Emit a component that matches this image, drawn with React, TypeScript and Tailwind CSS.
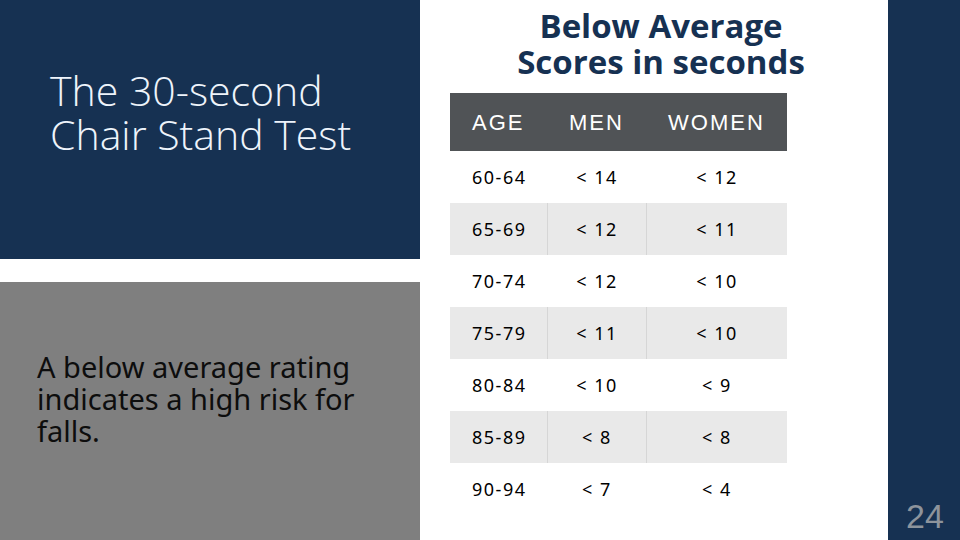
const rows = [
  { age: "60-64", men: "< 14", women: "< 12" },
  { age: "65-69", men: "< 12", women: "< 11" },
  { age: "70-74", men: "< 12", women: "< 10" },
  { age: "75-79", men: "< 11", women: "< 10" },
  { age: "80-84", men: "< 10", women: "< 9" },
  { age: "85-89", men: "< 8", women: "< 8" },
  { age: "90-94", men: "< 7", women: "< 4" },
];

function ScoreTable() {
  return (
    <div className="ml-[30px] w-[337px] font-['Noto_Sans',sans-serif]">
      {/* Header */}
      <div className="flex h-[58px] items-center bg-[#505356] font-['Liberation_Sans',sans-serif] text-[22px] tracking-[2px] text-white">
        <div className="w-[97px] pl-[22px]">AGE</div>
        <div className="w-[99px] text-center">MEN</div>
        <div className="flex-1 text-center">WOMEN</div>
      </div>

      {rows.map((row, i) => {
        const shaded = i % 2 === 1;
        return (
          <div
            key={row.age}
            className={`flex h-[52px] items-center text-[18px] tracking-[1.5px] text-black ${
              shaded ? "bg-[#e9e9e9]" : "bg-white"
            }`}
          >
            <div className="w-[97px] pl-[22px]">{row.age}</div>
            <div
              className={`flex h-full w-[99px] items-center justify-center border-l ${
                shaded ? "border-[#d6d6d6]" : "border-transparent"
              }`}
            >
              {row.men}
            </div>
            <div
              className={`flex h-full flex-1 items-center justify-center border-l ${
                shaded ? "border-[#d6d6d6]" : "border-transparent"
              }`}
            >
              {row.women}
            </div>
          </div>
        );
      })}
    </div>
  );
}

export default function App() {
  return (
    <div className="flex h-[540px] w-[960px] overflow-hidden bg-white">
      {/* Left column */}
      <div className="flex w-[420px] flex-col gap-[23px]">
        <div className="h-[259px] bg-[#163152] pl-[50px] pt-[68px]">
          <h1 className="font-['Open_Sans',sans-serif] text-[41px] font-light leading-[44px] text-[#eef4fb]">
            The 30-second
            <br />
            Chair Stand Test
          </h1>
        </div>
        <div className="flex flex-1 items-start bg-[#7f7f7f] pl-[37px] pt-[69px]">
          <p className="font-['Noto_Sans',sans-serif] text-[29px] leading-[32px] text-[#0d0d0d]">
            A below average rating
            <br />
            indicates a high risk for
            <br />
            falls.
          </p>
        </div>
      </div>

      {/* Middle: heading + table */}
      <div className="flex flex-1 flex-col">
        <h2 className="pl-[14px] pt-[8px] text-center font-['Open_Sans',sans-serif] text-[33px] font-bold leading-[36px] text-[#163152]">
          Below Average
          <br />
          Scores in seconds
        </h2>
        <div className="mt-[13px]">
          <ScoreTable />
        </div>
      </div>

      {/* Right strip */}
      <div className="flex w-[72px] flex-col justify-end bg-[#163152] pb-[4px] pl-[18px]">
        <span className="font-['Liberation_Sans',sans-serif] text-[34px] leading-[40px] text-[#8d949c]">
          24
        </span>
      </div>
    </div>
  );
}
